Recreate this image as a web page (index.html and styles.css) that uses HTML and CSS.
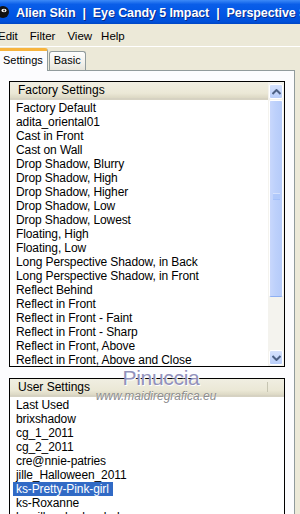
FILE: index.html
```html
<!DOCTYPE html>
<html lang="en">
<head>
    <meta charset="UTF-8">
    <meta name="viewport" content="width=device-width, initial-scale=1.0">
    <title>Eye Candy 5 Impact - Perspective Shadow</title>
    <link rel="stylesheet" href="styles.css">
</head>
<body>
    <div class="window">
        <div class="titlebar">
            <svg class="app-icon" width="12" height="14" viewBox="0 0 12 14">
                <circle cx="4" cy="7" r="6" fill="#111"/>
                <ellipse cx="5" cy="5.5" rx="2.6" ry="1.8" fill="#fff"/>
                <circle cx="5.2" cy="5.6" r="1" fill="#333"/>
            </svg>
            <span class="title">Alien Skin</span>
            <span class="title">|</span>
            <span class="title">Eye Candy 5 Impact</span>
            <span class="title">|</span>
            <span class="title">Perspective Shadow</span>
        </div>

        <div class="menubar">
            <span class="menu-edit">Edit</span>
            <span>Filter</span>
            <span>View</span>
            <span class="menu-help">Help</span>
        </div>

        <div class="tabs">
            <div class="tab active">Settings</div>
            <div class="tab">Basic</div>
        </div>

        <div class="panel">
            <!-- Factory presets -->
            <div class="listbox factory">
                <div class="list-main">
                    <div class="list-header">Factory Settings</div>
                    <div class="list-items">
                        <div class="item">Factory Default</div>
                        <div class="item">adita_oriental01</div>
                        <div class="item">Cast in Front</div>
                        <div class="item">Cast on Wall</div>
                        <div class="item">Drop Shadow, Blurry</div>
                        <div class="item">Drop Shadow, High</div>
                        <div class="item">Drop Shadow, Higher</div>
                        <div class="item">Drop Shadow, Low</div>
                        <div class="item">Drop Shadow, Lowest</div>
                        <div class="item">Floating, High</div>
                        <div class="item">Floating, Low</div>
                        <div class="item">Long Perspective Shadow, in Back</div>
                        <div class="item">Long Perspective Shadow, in Front</div>
                        <div class="item">Reflect Behind</div>
                        <div class="item">Reflect in Front</div>
                        <div class="item">Reflect in Front - Faint</div>
                        <div class="item">Reflect in Front - Sharp</div>
                        <div class="item">Reflect in Front, Above</div>
                        <div class="item">Reflect in Front, Above and Close</div>
                    </div>
                </div>
                <div class="scrollbar">
                    <div class="sb-btn">
                        <svg width="9" height="6" viewBox="0 0 9 6"><path d="M0.5 5 L4.5 1 L8.5 5" fill="none" stroke="#4d6185" stroke-width="2"/></svg>
                    </div>
                    <div class="sb-thumb">
                        <svg width="7" height="7" viewBox="0 0 7 7"><path d="M0 1h7M0 3h7M0 5h7" stroke="#eef3ff" stroke-width="1"/><path d="M0 2h7M0 4h7M0 6h7" stroke="#8cb0f8" stroke-width="1"/></svg>
                    </div>
                    <div class="sb-track"></div>
                    <div class="sb-btn">
                        <svg width="9" height="6" viewBox="0 0 9 6"><path d="M0.5 1 L4.5 5 L8.5 1" fill="none" stroke="#4d6185" stroke-width="2"/></svg>
                    </div>
                </div>
            </div>

            <!-- User presets -->
            <div class="listbox user">
                <div class="list-main">
                    <div class="list-header">
                        <span class="col-name">User Settings</span>
                        <span class="col-rest"></span>
                    </div>
                    <div class="list-items">
                        <div class="item">Last Used</div>
                        <div class="item">brixshadow</div>
                        <div class="item">cg_1_2011</div>
                        <div class="item">cg_2_2011</div>
                        <div class="item">cre@nnie-patries</div>
                        <div class="item">jille_Halloween_2011</div>
                        <div class="item"><span class="selected">ks-Pretty-Pink-girl</span></div>
                        <div class="item">ks-Roxanne</div>
                        <div class="item">ks-silke-shadow-lady</div>
                    </div>
                </div>
            </div>
        </div>

        <div class="watermark">
            <div class="wm-name">Pinuccia</div>
            <div class="wm-url">www.maidiregrafica.eu</div>
        </div>
    </div>
</body>
</html>
```

FILE: styles.css
```css
body {
    margin: 0;
    background-color: #ece9d8;
    font-family: "Liberation Sans", Arial, sans-serif;
    font-size: 11px;
    color: #000;
    overflow: hidden;
}
.window {
    position: relative;
    width: 300px;
    height: 514px;
    overflow: hidden;
    background-color: #ece9d8;
}
.titlebar {
    height: 24px;
    display: flex;
    align-items: center;
    gap: 7px;
    background: linear-gradient(#3d8af7, #0a5ee8 18%, #0055e5 60%, #0050da 90%, #0046c3);
    white-space: nowrap;
}
.app-icon {
    flex: none;
    margin-left: -1px;
    margin-right: -2px;
}
.title {
    flex: none;
    color: #fff;
    font-weight: bold;
    font-size: 12.5px;
    letter-spacing: -0.1px;
    text-shadow: 1px 1px 0 #0a2a8a;
    padding-top: 1px;
}
.menubar {
    height: 22px;
    display: flex;
    align-items: center;
    gap: 12px;
    border-bottom: 1px solid #fff;
    white-space: nowrap;
    font-size: 11.5px;
}
.menubar span {
    padding-top: 1px;
}
.menu-edit {
    margin-left: -2px;
}
.menu-help {
    margin-left: -3px;
}
.tabs {
    height: 23px;
    display: flex;
    align-items: flex-end;
    padding-top: 1px;
    box-sizing: border-box;
}
.tab {
    height: 18px;
    padding: 0 4px;
    margin-left: 1px;
    border: 1px solid #919b9c;
    border-bottom: none;
    border-radius: 3px 3px 0 0;
    background: linear-gradient(#fefefe, #f2f1ec 60%, #e6e4da);
    line-height: 17px;
    font-size: 11px;
}
.tab.active {
    height: 20px;
    margin-left: -2px;
    padding: 0 4px;
    border-top: 3px solid #f7b43e;
    background: #fcfcfe;
    line-height: 19px;
    position: relative;
    z-index: 1;
    margin-bottom: -1px;
}
.panel {
    height: 444px;
    width: 295px;
    background-color: #fcfcfe;
    border-top: 1px solid #919b9c;
    border-right: 1px solid #919b9c;
    padding: 10px 0 0 9px;
    box-sizing: border-box;
    display: flex;
    flex-direction: column;
    gap: 11px;
}
.listbox {
    width: 276px;
    border: 1px solid #000;
    background-color: #fff;
    display: flex;
    box-sizing: border-box;
    overflow: hidden;
    flex: none;
}
.factory {
    height: 286px;
}
.user {
    height: 160px;
}
.list-main {
    flex: 1;
    overflow: hidden;
}
.list-header {
    height: 16px;
    line-height: 16px;
    padding-left: 8px;
    background: linear-gradient(#f0eee2, #ebe8d6 70%, #dcd8c4);
    border-bottom: 2px solid #d6d2c2;
    font-size: 12px;
    white-space: nowrap;
}
.user .list-header {
    display: flex;
    padding-left: 0;
}
.col-name {
    width: 249px;
    padding-left: 8px;
    border-right: 1px solid #c7c5b2;
    margin: 3px 0;
    line-height: 11px;
}
.list-items {
    padding-top: 1px;
}
.item {
    height: 14px;
    line-height: 14px;
    padding-left: 6px;
    font-size: 12px;
    letter-spacing: -0.1px;
    white-space: nowrap;
}
.selected {
    display: inline-block;
    margin-left: -3px;
    padding: 0 4px 0 3px;
    background-color: #316ac5;
    color: #fff;
}
.scrollbar {
    width: 16px;
    flex: none;
    display: flex;
    flex-direction: column;
    background-color: #f4f3ee;
    padding: 2px 0 1px;
    box-sizing: border-box;
}
.sb-btn {
    height: 13px;
    margin: 0 1px;
    border: 1px solid #fff;
    border-radius: 2px;
    background: linear-gradient(#d6e2fd, #b9cefa);
    display: flex;
    align-items: center;
    justify-content: center;
    flex: none;
}
.sb-thumb {
    height: 197px;
    margin: 1px 1px 0;
    border: 1px solid #fff;
    border-bottom-color: #8fb0f3;
    border-radius: 2px;
    background: linear-gradient(90deg, #c8d7fc, #bcd0fb 50%, #b6cbf9);
    display: flex;
    align-items: flex-end;
    justify-content: center;
    padding-bottom: 96px;
    box-sizing: border-box;
    flex: none;
}
.sb-track {
    flex: 1;
}
.watermark {
    position: absolute;
    left: 94px;
    top: 366px;
    width: 124px;
    text-align: center;
    pointer-events: none;
}
.wm-name {
    font-size: 21px;
    line-height: 24px;
    color: #9292bc;
    letter-spacing: -0.3px;
    text-shadow: 1px 1px 0 #fff;
    padding-left: 10px;
}
.wm-url {
    font-size: 12px;
    line-height: 12px;
    color: #8c8c8c;
    font-style: italic;
    text-shadow: 0 1px 0 #fff;
}
```
